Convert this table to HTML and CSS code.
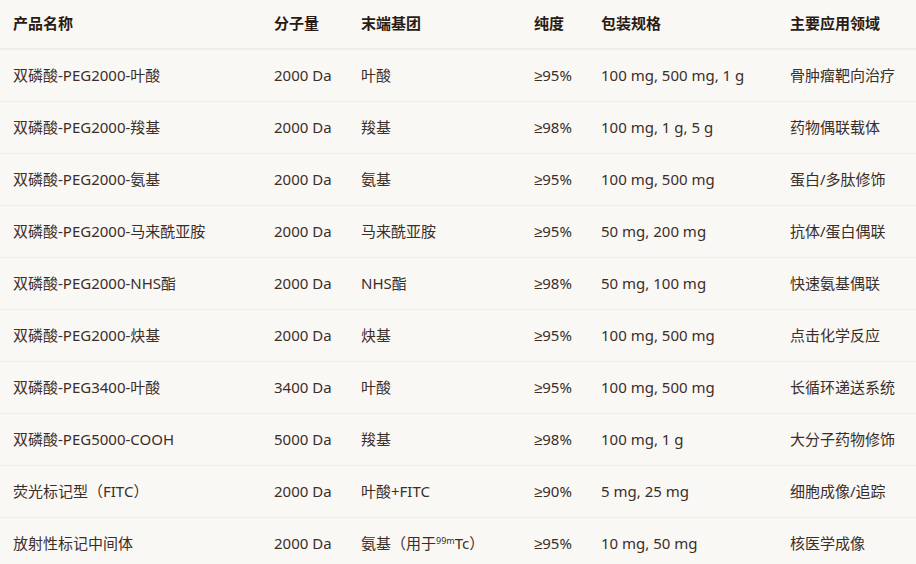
FILE: index.html
```html
<!DOCTYPE html>
<html lang="zh">
<head>
<meta charset="utf-8">
<link rel="stylesheet" href="styles.css">
</head>
<body>
<table class="spec">
  <colgroup>
    <col class="c-name"><col class="c-mw"><col class="c-end"><col class="c-pur"><col class="c-pack"><col class="c-app">
  </colgroup>
  <thead>
    <tr><th>产品名称</th><th>分子量</th><th>末端基团</th><th>纯度</th><th>包装规格</th><th>主要应用领域</th></tr>
  </thead>
  <tbody>
    <tr><td>双磷酸-PEG2000-叶酸</td><td>2000 Da</td><td>叶酸</td><td>≥95%</td><td>100 mg, 500 mg, 1 g</td><td>骨肿瘤靶向治疗</td></tr>
    <tr><td>双磷酸-PEG2000-羧基</td><td>2000 Da</td><td>羧基</td><td>≥98%</td><td>100 mg, 1 g, 5 g</td><td>药物偶联载体</td></tr>
    <tr><td>双磷酸-PEG2000-氨基</td><td>2000 Da</td><td>氨基</td><td>≥95%</td><td>100 mg, 500 mg</td><td>蛋白/多肽修饰</td></tr>
    <tr><td>双磷酸-PEG2000-马来酰亚胺</td><td>2000 Da</td><td>马来酰亚胺</td><td>≥95%</td><td>50 mg, 200 mg</td><td>抗体/蛋白偶联</td></tr>
    <tr><td>双磷酸-PEG2000-NHS酯</td><td>2000 Da</td><td>NHS酯</td><td>≥98%</td><td>50 mg, 100 mg</td><td>快速氨基偶联</td></tr>
    <tr><td>双磷酸-PEG2000-炔基</td><td>2000 Da</td><td>炔基</td><td>≥95%</td><td>100 mg, 500 mg</td><td>点击化学反应</td></tr>
    <tr><td>双磷酸-PEG3400-叶酸</td><td>3400 Da</td><td>叶酸</td><td>≥95%</td><td>100 mg, 500 mg</td><td>长循环递送系统</td></tr>
    <tr><td>双磷酸-PEG5000-COOH</td><td>5000 Da</td><td>羧基</td><td>≥98%</td><td>100 mg, 1 g</td><td>大分子药物修饰</td></tr>
    <tr><td>荧光标记型（FITC）</td><td>2000 Da</td><td>叶酸+FITC</td><td>≥90%</td><td>5 mg, 25 mg</td><td>细胞成像/追踪</td></tr>
    <tr><td>放射性标记中间体</td><td>2000 Da</td><td>氨基（用于<sup>99m</sup>Tc）</td><td>≥95%</td><td>10 mg, 50 mg</td><td>核医学成像</td></tr>
  </tbody>
</table>
</body>
</html>
```
FILE: styles.css
```css
html, body {
  margin: 0;
  padding: 0;
  background: #faf8f5;
}
body {
  font-family: "Noto Sans", "Liberation Sans", "Noto Sans CJK SC", sans-serif;
  color: #3a2e29;
}
.spec {
  width: 916px;
  border-collapse: collapse;
  table-layout: fixed;
}
.c-name { width: 261px; }
.c-mw { width: 87px; }
.c-end { width: 173px; }
.c-pur { width: 67px; }
.c-pack { width: 189px; }
.c-app { width: 139px; }
.spec th {
  text-align: left;
  font-weight: 700;
  font-size: 15px;
  line-height: 22px;
  color: #2a1b14;
  padding: 12px 0 14px 13px;
  border-bottom: 2px solid #efedea;
  white-space: nowrap;
}
.spec td {
  font-size: 15px;
  line-height: 21px;
  padding: 15px 0 15px 13px;
  border-bottom: 1px solid #efede9;
  white-space: nowrap;
}
.spec sup {
  font-size: 9px;
  line-height: 0;
  vertical-align: 5px;
}
```
